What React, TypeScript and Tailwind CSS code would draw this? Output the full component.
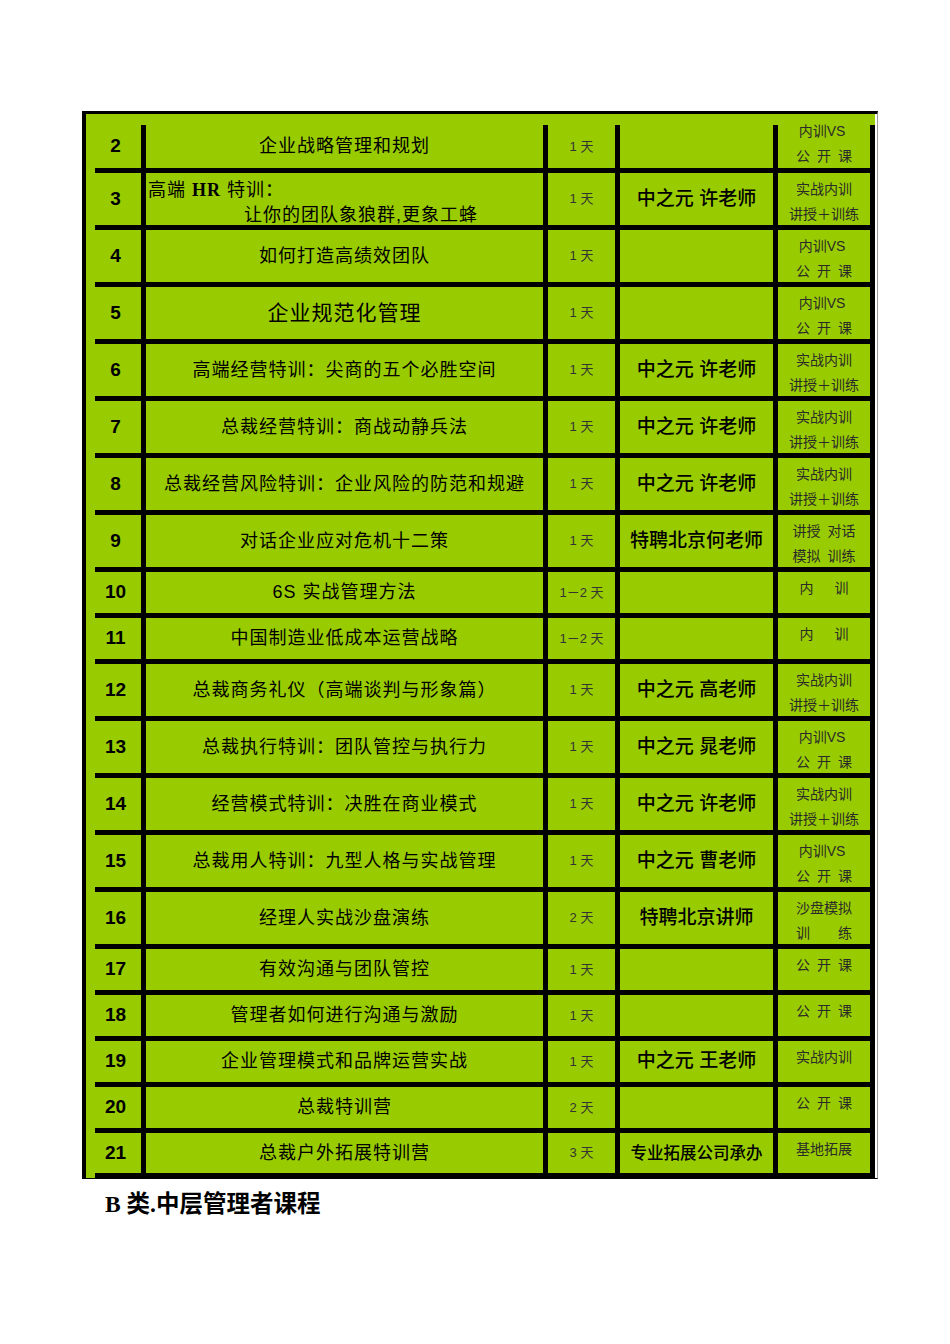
import React from 'react';

type Row = {
  n: string;
  title: React.ReactNode;
  days: string;
  teacher?: string;
  kind: string[];
  h: string;
  titleClass?: string;
  teacherClass?: string;
  kindClass?: string;
};

const TALL = 'h-[57px]';
const SHORT = 'h-[46px]';

const XU = '中之元 许老师';
const TRAIN = ['实战内训', '讲授＋训练'];
const OPEN = ['内训VS ', '公\u2002开\u2002课'];

const rows: Row[] = [
  { n: '2', title: '企业战略管理和规划', days: '1 天', kind: OPEN, h: 'h-[48px]', kindClass: '-mt-[10px]' },
  {
    n: '3',
    title: (
      <div className="w-full pl-[2px] pt-[7px] text-left leading-[25px]">
        <div>
          高端 <span className="font-['Liberation_Serif'] font-bold">HR</span> 特训：
        </div>
        <div className="pl-[96px]">让你的团队象狼群,更象工蜂</div>
      </div>
    ),
    days: '1 天',
    teacher: XU,
    kind: TRAIN,
    h: TALL,
  },
  { n: '4', title: '如何打造高绩效团队', days: '1 天', kind: OPEN, h: TALL },
  { n: '5', title: '企业规范化管理', days: '1 天', kind: OPEN, h: TALL, titleClass: 'text-[21px]' },
  { n: '6', title: '高端经营特训：尖商的五个必胜空间', days: '1 天', teacher: XU, kind: TRAIN, h: TALL },
  { n: '7', title: '总裁经营特训：商战动静兵法', days: '1 天', teacher: XU, kind: TRAIN, h: TALL },
  { n: '8', title: '总裁经营风险特训：企业风险的防范和规避', days: '1 天', teacher: XU, kind: TRAIN, h: TALL },
  { n: '9', title: '对话企业应对危机十二策', days: '1 天', teacher: '特聘北京何老师', kind: ['讲授\u2002对话', '模拟\u2002训练'], h: TALL },
  { n: '10', title: '6S 实战管理方法', days: '1－2 天', kind: ['内\u3000\u2002训'], h: SHORT },
  { n: '11', title: '中国制造业低成本运营战略', days: '1－2 天', kind: ['内\u3000\u2002训'], h: SHORT },
  { n: '12', title: '总裁商务礼仪（高端谈判与形象篇）', days: '1 天', teacher: '中之元 高老师', kind: TRAIN, h: TALL },
  { n: '13', title: '总裁执行特训：团队管控与执行力', days: '1 天', teacher: '中之元 晁老师', kind: OPEN, h: TALL },
  { n: '14', title: '经营模式特训：决胜在商业模式', days: '1 天', teacher: XU, kind: TRAIN, h: TALL },
  { n: '15', title: '总裁用人特训：九型人格与实战管理', days: '1 天', teacher: '中之元 曹老师', kind: OPEN, h: TALL },
  { n: '16', title: '经理人实战沙盘演练', days: '2 天', teacher: '特聘北京讲师', kind: ['沙盘模拟', '训\u3000\u3000练'], h: TALL },
  { n: '17', title: '有效沟通与团队管控', days: '1 天', kind: ['公\u2002开\u2002课'], h: SHORT },
  { n: '18', title: '管理者如何进行沟通与激励', days: '1 天', kind: ['公\u2002开\u2002课'], h: SHORT },
  { n: '19', title: '企业管理模式和品牌运营实战', days: '1 天', teacher: '中之元 王老师', kind: ['实战内训'], h: SHORT },
  { n: '20', title: '总裁特训营', days: '2 天', kind: ['公\u2002开\u2002课'], h: SHORT },
  { n: '21', title: '总裁户外拓展特训营', days: '3 天', teacher: '专业拓展公司承办', kind: ['基地拓展'], h: 'h-[45px]', teacherClass: 'text-[16.5px]' },
];

function CourseRow({ row }: { row: Row }) {
  return (
    <div className={`flex border-b-[5px] border-black ${row.h}`}>
      <div className="w-[46px] pr-[5px] flex items-center justify-center text-[19px] font-bold text-black">{row.n}</div>
      <div
        className={`w-[402px] border-l-[5px] border-black flex items-center justify-center text-black ${row.titleClass ?? 'text-[18px]'} tracking-[1px]`}
      >
        {row.title}
      </div>
      <div className="w-[72px] border-l-[5px] border-black flex items-center justify-center text-[13px] text-[#333]">
        {row.days}
      </div>
      <div
        className={`w-[158px] border-l-[5px] border-black flex items-center justify-center font-medium text-black ${row.teacherClass ?? 'text-[19px]'}`}
      >
        {row.teacher}
      </div>
      <div className="w-[97px] border-l-[5px] border-black pt-[4px] text-center text-[14px] leading-[25px] text-[#2a2a2a]">
        <div className={row.kindClass}>
          {row.kind.map((line) => (
            <div key={line} className="whitespace-pre">
              {line}
            </div>
          ))}
        </div>
      </div>
    </div>
  );
}

export default function App() {
  return (
    <div className="min-h-[1344px] bg-white pt-[111px] font-['Liberation_Sans','Noto_Sans_CJK_SC',sans-serif]">
      <div className="ml-[82px] w-fit border-t-[3px] border-l-[4px] border-b border-black border-r border-r-[#9a9a9a] bg-white pr-[2px]">
        <div className="bg-[#99cc00] pl-[9px] pt-[11px]">
          <div className="border-r-[5px] border-black">
            {rows.map((row) => (
              <CourseRow key={row.n} row={row} />
            ))}
          </div>
        </div>
      </div>
      <div className="ml-[105px] mt-[10px] text-[23.5px] font-bold leading-[30px] text-black font-['Liberation_Serif','Noto_Sans_CJK_SC',serif]">
        B 类.中层管理者课程
      </div>
    </div>
  );
}
